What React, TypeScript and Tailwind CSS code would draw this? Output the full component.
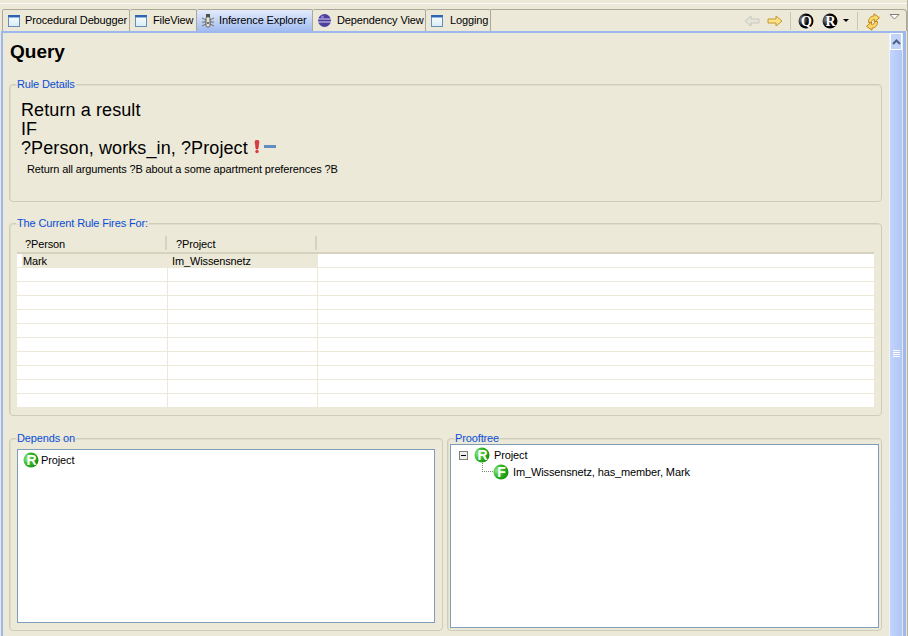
import { ReactNode } from "react";

const font = "font-['Liberation_Sans',Arial,sans-serif]";
const small = "text-[11px] tracking-[-0.13px]";

function WindowIcon() {
    return (
        <svg width="14" height="14" viewBox="0 0 14 14" className="shrink-0">
            <defs>
                <linearGradient id="win-body" x1="0" y1="0" x2="0" y2="1">
                    <stop offset="0%" stopColor="#ffffff" />
                    <stop offset="100%" stopColor="#d4ecf8" />
                </linearGradient>
            </defs>
            <rect x="1.5" y="1.5" width="11" height="11" fill="url(#win-body)" stroke="#6a8db8" />
            <rect x="1" y="1" width="12" height="2" fill="#2f66b0" />
            <rect x="2" y="3" width="10" height="1" fill="#8fb8e8" />
        </svg>
    );
}

function InferenceIcon() {
    return (
        <svg width="14" height="16" viewBox="0 0 14 16" className="shrink-0">
            <path d="M1 5l4 2M13 5L9 7M1 9h4M13 9H9M1 13l4-2M13 13l-4-2" stroke="#6f6f66" strokeWidth="1" fill="none" />
            <rect x="5" y="1" width="4" height="3" fill="#4f4f48" />
            <rect x="5" y="4" width="4" height="10" rx="1.5" fill="#e4e4dc" stroke="#5c5c54" strokeWidth="1" />
            <rect x="6" y="9" width="2" height="2" fill="#77776c" />
        </svg>
    );
}

function SphereIcon() {
    return (
        <svg width="15" height="15" viewBox="0 0 15 15" className="shrink-0">
            <circle cx="7.5" cy="7.5" r="6.5" fill="#4c3f9e" />
            <path d="M1 6h13M1 9h13" stroke="#d9d6f0" strokeWidth="1" />
            <circle cx="5.5" cy="4" r="1.5" fill="#8b80d0" />
        </svg>
    );
}

function BallIcon({ letter, black }: { letter: string; black?: boolean }) {
    const id = `ball-${letter}-${black ? "k" : "g"}`;
    return (
        <svg width="16" height="16" viewBox="0 0 16 16" className="shrink-0">
            <defs>
                <radialGradient id={id} cx="25%" cy="40%" r="80%">
                    <stop offset="0%" stopColor={black ? "#8a8a8a" : "#8ee878"} />
                    <stop offset="55%" stopColor={black ? "#000000" : "#2cb322"} />
                    <stop offset="100%" stopColor={black ? "#000000" : "#128a10"} />
                </radialGradient>
            </defs>
            <circle cx="8" cy="8" r="7.5" fill={`url(#${id})`} />
            <text
                x="8.5"
                y="13"
                textAnchor="middle"
                fontSize="14"
                fontWeight="700"
                fill="#ffffff"
                fontFamily={black ? "'Liberation Serif', serif" : "'Liberation Sans', sans-serif"}
            >
                {letter}
            </text>
        </svg>
    );
}

function Tab({
    icon,
    label,
    width,
    gap,
    active,
    first,
}: {
    icon: ReactNode;
    label: string;
    width: string;
    gap: string;
    active?: boolean;
    first?: boolean;
}) {
    return (
        <div
            className={`${width} ${gap} ${small} h-[22px] flex items-center pl-[4px] border-r border-t border-[#aca899] rounded-t-[2px] text-black whitespace-nowrap ${
                first ? "border-l" : ""
            } ${active ? "bg-gradient-to-b from-[#e4ecfb] to-[#a2bcf0]" : "bg-[#ece9d8]"}`}
        >
            {icon}
            <span>{label}</span>
        </div>
    );
}

function ToolBar() {
    return (
        <div className="flex-1 h-[22px] flex items-center border-t border-r border-[#aca899] rounded-tr-[4px] pl-[253px]">
            <svg width="16" height="14" viewBox="0 0 16 14" className="shrink-0">
                <path d="M1 7l6-5v3h8v4H7v3z" fill="#e6e4d6" stroke="#c8c8c0" />
            </svg>
            <svg width="16" height="14" viewBox="0 0 16 14" className="shrink-0 ml-[7px]">
                <path d="M15 7L9 2v3H1v4h8v3z" fill="#fbe38a" stroke="#c8962a" />
            </svg>
            <div className="w-px h-[18px] bg-[#c8c5b2] ml-[7px]" />
            <div className="ml-[7px]">
                <BallIcon letter="Q" black />
            </div>
            <div className="ml-[8px]">
                <BallIcon letter="R" black />
            </div>
            <div className="ml-[5px] w-0 h-0 border-x-[3px] border-t-[3px] border-x-transparent border-t-black" />
            <div className="w-px h-[18px] bg-[#c8c5b2] ml-[8px]" />
            <svg width="16" height="18" viewBox="0 0 16 18" className="shrink-0 ml-[7px] mt-[2px]">
                <g fill="#fbd76a" stroke="#c08a20" strokeWidth="1" strokeLinejoin="round">
                    <path d="M3.5 9.5C3.5 5 6 3 9 3V.8l5.5 3.9L9.5 9V6.5C7.5 6.5 6.5 7.5 6 9.5z" />
                    <path d="M12.5 8.5c0 4.500-2.500 6.500-5.500 6.500v2.200l-5.500-3.900L6.500 9v2.500c2 0 3-1 3.500-3z" />
                </g>
            </svg>
            <svg width="11" height="6" viewBox="0 0 11 6" className="shrink-0 ml-[8px] -mt-[7px]">
                <path d="M1 .5h9L5.500 5z" fill="#ffffff" stroke="#808078" />
            </svg>
        </div>
    );
}

function Group({ title, className, children }: { title: string; className: string; children: ReactNode }) {
    return (
        <fieldset className={`border border-[#cfcdb9] rounded-[4px] min-w-0 shadow-[inset_1px_1px_0_#dfddcc] ${className}`}>
            <legend className={`${small} ml-[6px] px-px leading-[13px] text-[#0a4ed6]`}>{title}</legend>
            {children}
        </fieldset>
    );
}

const rows = Array.from({ length: 11 });

export default function App() {
    return (
        <div className={`${font} w-[908px] h-[636px] overflow-hidden bg-[#ece9d8] flex flex-col border-r border-[#b5b29f]`}>
            <div className="h-[3px] shrink-0" />
            <div className="h-px shrink-0 bg-[#fbfaf5]" />
            <div className="h-[5px] shrink-0" />

            <div className="flex pl-[2px] shrink-0">
                <Tab icon={<WindowIcon />} label="Procedural Debugger" width="w-[128px]" gap="gap-[4px]" first />
                <Tab icon={<WindowIcon />} label="FileView" width="w-[67px]" gap="gap-[5px]" />
                <Tab icon={<InferenceIcon />} label="Inference Explorer" width="w-[116px]" gap="gap-[4px]" active />
                <Tab icon={<SphereIcon />} label="Dependency View" width="w-[113px]" gap="gap-[5px]" />
                <Tab icon={<WindowIcon />} label="Logging" width="w-[65px]" gap="gap-[6px]" />
                <ToolBar />
            </div>

            <div className="flex-1 min-h-0 ml-[1px] mr-[1px] border-t-2 border-l-2 border-r-[3px] border-[#9db8ee] flex">
                <div className="flex-1 min-w-0 flex flex-col pl-[6px] pr-[7px]">
                    <h1 className="mt-[7px] h-[26px] pl-px text-[19px] leading-[24px] font-bold text-black">Query</h1>

                    <Group title="Rule Details" className="mt-[12px] h-[124px] text-black">
                        <div className="pl-[11px] pt-[10px] text-[18px] leading-[19px] tracking-[0.1px]">
                            <div>Return a result</div>
                            <div>IF</div>
                            <div className="flex items-center">
                                ?Person, works_in, ?Project
                                <svg width="6" height="14" viewBox="0 0 6 14" className="ml-[6px] -mt-[3px] shrink-0">
                                    <path d="M1 2a2 2 0 0 1 4 0L4 9H2z" fill="#dc3a44" stroke="#b8202c" strokeWidth="0.5" />
                                    <circle cx="3" cy="11.5" r="1.7" fill="#dc3a44" />
                                </svg>
                                <span className="ml-[4px] w-[12px] h-[3px] -mt-[5px] bg-[#5f8fc0]" />
                            </div>
                        </div>
                        <p className={`${small} mt-[5px] pl-[17px] leading-[13px]`}>
                            Return all arguments ?B about a some apartment preferences ?B
                        </p>
                    </Group>

                    <Group title="The Current Rule Fires For:" className="mt-[15px] h-[199px] text-black">
                        <div className="px-[7px] pt-[6px]">
                            <div className={`${small} flex h-[16px] items-start`}>
                                <div className="w-[150px] h-[14px] pl-[8px] border-r-2 border-[#d5d3c0] leading-[16px]">?Person</div>
                                <div className="w-[150px] h-[14px] pl-[9px] border-r-2 border-[#d5d3c0] leading-[16px]">?Project</div>
                            </div>
                            <div className="border-t-2 border-[#d5d3c0] bg-white">
                                {rows.map((_, i) => (
                                    <div key={i} className={`${small} flex h-[14px] border-b border-[#ece9d8] leading-[15px]`}>
                                        <div className="w-[151px] border-r border-[#ece9d8] flex">
                                            <div className="w-[5px] shrink-0" />
                                            <div className={`flex-1 pl-px ${i === 0 ? "bg-[#ece9d8]" : ""}`}>{i === 0 ? "Mark" : ""}</div>
                                        </div>
                                        <div className={`w-[150px] border-r border-[#ece9d8] pl-[4px] ${i === 0 ? "bg-[#ece9d8]" : ""}`}>
                                            {i === 0 ? "Im_Wissensnetz" : ""}
                                        </div>
                                    </div>
                                ))}
                            </div>
                        </div>
                    </Group>

                    <div className="mt-[16px] flex gap-[4px] items-start">
                        <Group title="Depends on" className="w-[434px] h-[199px]">
                            <div className="mx-[7px] h-[174px] mt-[4px] border border-[#7f9db9] bg-white pl-[5px] pt-[2px] flex items-start gap-[2px] text-black">
                                <BallIcon letter="R" />
                                <span className={`${small} leading-[16px]`}>Project</span>
                            </div>
                        </Group>
                        <Group title="Prooftree" className="w-[435px] h-[199px]">
                            <div className={`${small} mx-[2px] -mt-px h-[184px] border border-[#7f9db9] bg-white leading-[16px] text-black pt-[2px]`}>
                                <div className="flex items-center h-[16px] pl-[8px]">
                                    <div className="w-[9px] h-[9px] border border-[#7f7f7f] flex items-center justify-center bg-[#f0f0e8]">
                                        <div className="w-[5px] h-px bg-black" />
                                    </div>
                                    <div className="ml-[6px]">
                                        <BallIcon letter="R" />
                                    </div>
                                    <span className="ml-[4px]">Project</span>
                                </div>
                                <div className="flex items-center h-[17px] pl-[31px]">
                                    <div className="w-[11px] h-[9px] -mt-[9px] border-l border-b border-dotted border-[#808080]" />
                                    <BallIcon letter="F" />
                                    <span className="ml-[4px]">Im_Wissensnetz, has_member, Mark</span>
                                </div>
                            </div>
                        </Group>
                    </div>
                </div>

                <div className="w-[13px] shrink-0 flex flex-col bg-gradient-to-r from-[#c3d4fb] to-[#b0c5f8] border-l border-[#f0f3fc]">
                    <div className="h-[17px] shrink-0 border border-white bg-[#c2d3f8] flex items-center justify-center">
                        <svg width="9" height="6" viewBox="0 0 9 6">
                            <path d="M1 5l3.5-3.5L8 5" fill="none" stroke="#4d6185" strokeWidth="2" />
                        </svg>
                    </div>
                    <div className="flex-1 flex flex-col items-center pt-[300px] gap-px">
                        <div className="w-[7px] h-px bg-white" />
                        <div className="w-[7px] h-px bg-white" />
                        <div className="w-[7px] h-px bg-white" />
                        <div className="w-[7px] h-px bg-white" />
                    </div>
                </div>
                <div className="w-px shrink-0 bg-[#ece9d8]" />
            </div>
        </div>
    );
}
